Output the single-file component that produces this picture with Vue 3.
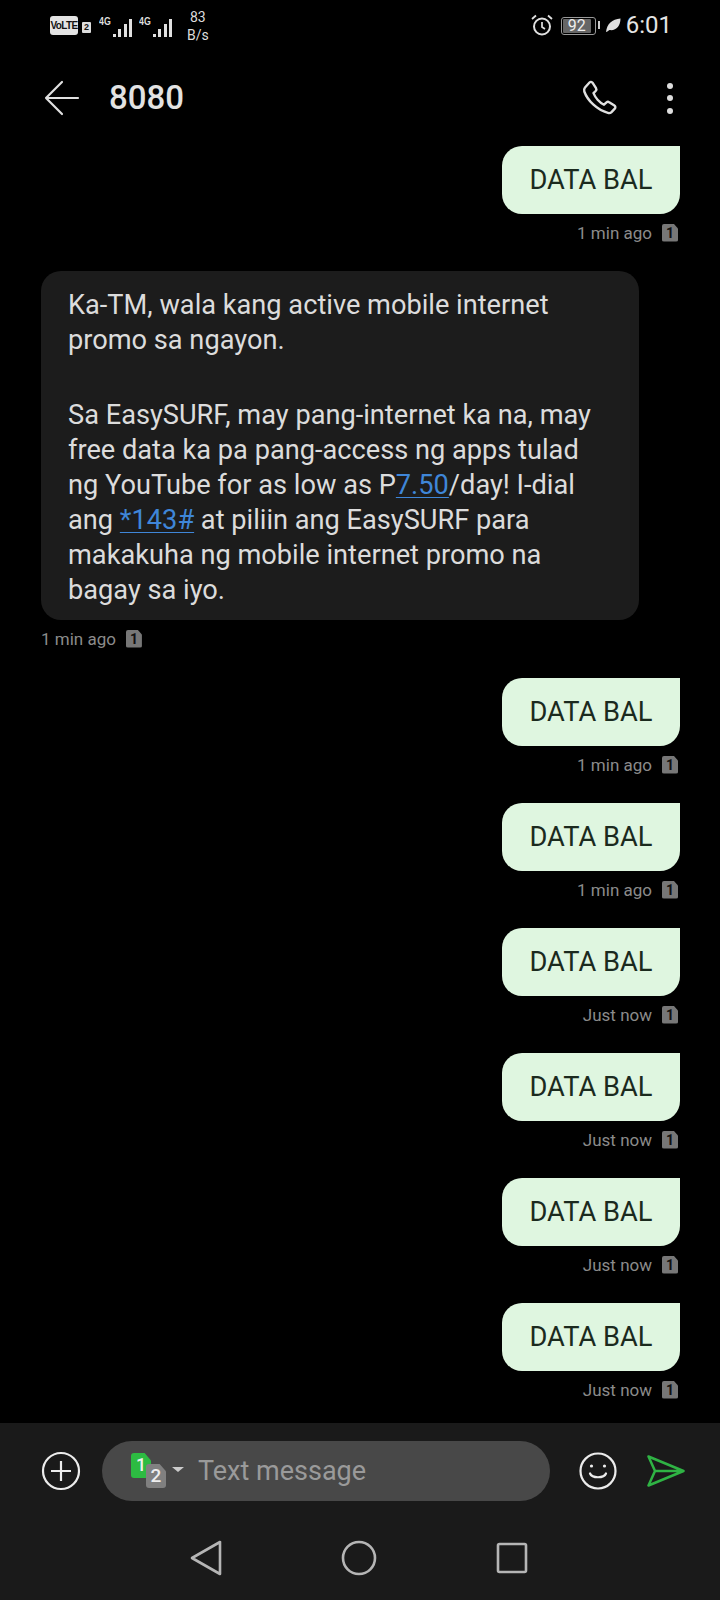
<script setup>
const sent = [
  { time: '1 min ago' },
  { time: '1 min ago' },
  { time: 'Just now' },
  { time: 'Just now' },
  { time: 'Just now' },
  { time: 'Just now' },
]
const barHeights = [3, 8, 13, 18]
</script>

<template>
  <div class="screen">
    <div class="status">
      <div class="status-left">
        <span class="volte">VoLTE</span>
        <span class="mini-sim">2</span>
        <div class="signal first">
          <span class="net">4G</span>
          <span class="bars">
            <i v-for="h in barHeights" :key="h" :style="{ height: h + 'px' }"></i>
          </span>
        </div>
        <div class="signal second">
          <span class="net">4G</span>
          <span class="bars">
            <i v-for="h in barHeights" :key="h" :style="{ height: h + 'px' }"></i>
          </span>
        </div>
        <div class="speed">83<br />B/s</div>
      </div>
      <div class="status-right">
        <svg class="alarm" width="24" height="24" viewBox="0 0 24 24" fill="none" stroke="#e0e0e0" stroke-width="2">
          <circle cx="12" cy="13.5" r="8" />
          <path d="M12 9v5l3 2" stroke-width="1.7" />
          <path d="M2 6l4-3.5M22 6l-4-3.5" stroke-width="1.8" />
        </svg>
        <div class="battery"><span class="level">92</span></div>
        <span class="nub"></span>
        <svg class="leaf" width="16" height="16" viewBox="0 0 16 16">
          <path d="M1 15C2 7 7 2 15.500 1.500 15.500 9 11 14 4.500 13 3.500 13.500 2 15 1 15Z" fill="#e0e0e0" />
        </svg>
        <span class="clock">6:01</span>
      </div>
    </div>

    <header class="head">
      <svg class="back" width="36" height="36" viewBox="0 0 36 36" fill="none" stroke="#e0e0e0" stroke-width="2.200" stroke-linecap="round" stroke-linejoin="round">
        <path d="M34 18H2M18 2 2 18l16 16" />
      </svg>
      <h1 class="title">8080</h1>
      <svg class="phone" width="36" height="36" viewBox="0 0 36 36" fill="none" stroke="#e0e0e0" stroke-width="2.400" stroke-linejoin="round">
        <path d="M3 7.500 7.500 2.500c1-1 2.300-.8 3 .2l3.500 5.500c.6 1 .5 2-.3 2.800l-2.200 2.200c1.500 4 6 9.200 10.500 11.500l2.500-2.300c.8-.7 1.800-.8 2.700-.2l5.200 3.300c1.100.7 1.300 2.200.4 3.100l-3.300 3.500c-1 1-2.300 1.200-3.600.8C15 30 5.500 20.500 2.300 11.500 1.900 10 2.200 8.500 3 7.500Z" />
      </svg>
      <div class="dots"><i></i><i></i><i></i></div>
    </header>

    <main class="thread">
      <div class="msg out">
        <div class="bubble-out">DATA BAL</div>
        <div class="meta"><span>1 min ago</span><span class="sim">1</span></div>
      </div>

      <div class="msg in">
        <div class="bubble-in">
          <p>
            Ka-TM, wala kang active mobile internet<br />
            promo sa ngayon.
          </p>
          <p>
            Sa EasySURF, may pang-internet ka na, may<br />
            free data ka pa pang-access ng apps tulad<br />
            ng YouTube for as low as P<a class="link">7.50</a>/day! I-dial<br />
            ang <a class="link">*143#</a> at piliin ang EasySURF para<br />
            makakuha ng mobile internet promo na<br />
            bagay sa iyo.
          </p>
        </div>
        <div class="meta"><span>1 min ago</span><span class="sim">1</span></div>
      </div>

      <div v-for="(m, i) in sent" :key="i" class="msg out">
        <div class="bubble-out">DATA BAL</div>
        <div class="meta"><span>{{ m.time }}</span><span class="sim">1</span></div>
      </div>
    </main>

    <footer class="dock">
      <div class="composer">
        <svg width="40" height="40" viewBox="0 0 40 40" fill="none" stroke="#ececec" stroke-width="2.200" class="plus">
          <circle cx="20" cy="20" r="18" />
          <path d="M20 10v20M10 20h20" />
        </svg>
        <div class="pill">
          <div class="sims">
            <span class="sim-a">1</span>
            <span class="sim-b">2</span>
          </div>
          <span class="caret"></span>
          <span class="placeholder">Text message</span>
        </div>
        <svg width="38" height="38" viewBox="0 0 38 38" fill="none" stroke="#ececec" stroke-width="2.200" class="smile">
          <circle cx="19" cy="19" r="17.500" />
          <circle cx="12.500" cy="14" r="1.600" fill="#ececec" stroke="none" />
          <circle cx="25.500" cy="14" r="1.600" fill="#ececec" stroke="none" />
          <path d="M11 21.500c2 5 14 5 16 0" stroke-linecap="round" />
        </svg>
        <svg width="38" height="32" viewBox="0 0 38 32" fill="none" stroke="#2fb344" stroke-width="2.500" stroke-linejoin="round" class="send">
          <path d="M1.500 1.500 36.500 16 1.500 30.500 8 16ZM8 16h28" />
        </svg>
      </div>
      <nav class="nav">
        <svg width="32" height="36" viewBox="0 0 32 36" fill="none" stroke="#b5b5b5" stroke-width="2.600" stroke-linejoin="round">
          <path d="M30 2v32L2 18Z" />
        </svg>
        <svg width="36" height="36" viewBox="0 0 36 36" fill="none" stroke="#b5b5b5" stroke-width="2.600">
          <circle cx="18" cy="18" r="16" />
        </svg>
        <svg width="32" height="32" viewBox="0 0 32 32" fill="none" stroke="#b5b5b5" stroke-width="2.600" stroke-linejoin="round">
          <rect x="2" y="2" width="28" height="28" rx="1.500" />
        </svg>
      </nav>
    </footer>
  </div>
</template>

<style>
html, body { margin: 0; background: #000; }
</style>

<style scoped>
.screen {
  width: 720px;
  height: 1600px;
  background: #000;
  display: flex;
  flex-direction: column;
  font-family: Roboto, "Liberation Sans", sans-serif;
  overflow: hidden;
}
.status {
  height: 50px;
  flex: none;
  display: flex;
  justify-content: space-between;
  align-items: center;
  padding: 0 50px;
  box-sizing: border-box;
  color: #e0e0e0;
}
.status-left, .status-right { display: flex; align-items: center; }
.volte {
  width: 28px; height: 19px; border-radius: 3px; background: #e4e4e4; color: #111;
  font: 700 10px/19px "Liberation Sans", sans-serif; letter-spacing: -0.6px; text-align: center;
  margin-top: 1px;
}
.mini-sim {
  width: 9px; height: 11px; margin-left: 4px; margin-top: 5px; border-radius: 1px; background: #ddd; color: #111;
  font: 700 9px/11px "Liberation Sans", sans-serif; text-align: center;
}
.signal { position: relative; display: flex; align-items: flex-end; height: 22px; margin-top: 2px; }
.signal.first { width: 33px; margin-left: 8px; justify-content: flex-end; }
.signal.second { width: 33px; margin-left: 7px; justify-content: flex-end; }
.net { position: absolute; left: 0; top: 0; font: 700 11px/12px "Liberation Sans", sans-serif; color: #ddd; transform: scaleX(.8); transform-origin: left; }
.bars { display: flex; align-items: flex-end; gap: 2.500px; }
.bars i { display: block; width: 3px; background: #e0e0e0; }
.speed { margin-left: 15px; font-size: 14px; line-height: 18px; text-align: center; color: #ddd; margin-top: 1px; }
.alarm { margin-right: 7px; }
.battery {
  width: 35px; height: 18px; box-sizing: border-box; border: 1.500px solid #999; border-radius: 3px; padding: 1px;
  margin-top: 1px;
}
.level {
  display: block; width: 90%; height: 100%; background: #666; color: #eee; border-radius: 1px;
  font-size: 16px; line-height: 13px; text-align: center;
}
.nub { width: 2px; height: 8px; background: #ccc; margin-left: 2px; margin-right: 5px; }
.leaf { margin-right: 5px; }
.clock { font-size: 24px; line-height: 28px; color: #e4e4e4; margin-right: -2px; }

.head {
  height: 96px;
  flex: none;
  display: flex;
  align-items: center;
  padding: 0 47px 0 44px;
  box-sizing: border-box;
}
.title {
  margin: 0 0 0 29px;
  flex: 1;
  font-size: 33px;
  font-weight: 500;
  color: #e2e2e2;
  line-height: 40px;
}
.dots { display: flex; flex-direction: column; gap: 6.500px; margin-left: 49px; }
.dots i { width: 6px; height: 6px; border-radius: 50%; background: #ddd; }

.thread { flex: 1; min-height: 0; display: flex; flex-direction: column; }
.msg { display: flex; flex-direction: column; flex: none; }
.msg.out { align-items: flex-end; padding-right: 40px; margin-bottom: 20px; }
.msg.in { align-items: flex-start; padding-left: 41px; margin-bottom: 21px; }
.bubble-out {
  width: 178px;
  height: 68px;
  box-sizing: border-box;
  padding-top: 1px;
  background: #dff6e0;
  border-radius: 20px 0 20px 20px;
  color: #1b2a1e;
  font-size: 27.300px;
  line-height: 67px;
  text-align: center;
}
.bubble-in {
  width: 598px;
  box-sizing: border-box;
  padding: 17px 27px 12px;
  background: #1c1c1c;
  border-radius: 20px;
  color: #dcdcdc;
  font-size: 27.200px;
  line-height: 35px;
  white-space: nowrap;
}
.bubble-in p { margin: 0; }
.bubble-in p + p { margin-top: 40px; }
.link { color: #3f86d8; text-decoration: underline; text-underline-offset: 3px; text-decoration-thickness: 1px; }
.meta {
  height: 37px;
  display: flex;
  align-items: center;
  gap: 10px;
  color: #8b8b8b;
  font-size: 17px;
}
.msg.out .meta { padding-right: 2px; }
.sim {
  width: 16px; height: 18px; background: #777; color: #111; border-radius: 2px;
  clip-path: polygon(0 0, 72% 0, 100% 28%, 100% 100%, 0 100%);
  font-size: 14px; font-weight: 700; line-height: 18px; text-align: center;
}

.dock { height: 177px; flex: none; background: #1a1a1a; display: flex; flex-direction: column; }
.composer { display: flex; align-items: center; height: 96px; padding: 0 0 0 41px; box-sizing: border-box; }
.pill {
  width: 448px; height: 60px; margin-left: 21px; background: #484848; border-radius: 30px;
  display: flex; align-items: center; flex: none;
}
.sims { position: relative; width: 36px; height: 36px; margin-left: 29px; flex: none; }
.sim-a, .sim-b {
  position: absolute; color: #eee; font-size: 15px; font-weight: 500; text-align: center; border-radius: 3px;
  clip-path: polygon(0 0, 68% 0, 100% 30%, 100% 100%, 0 100%);
}
.sim-a { left: 0; top: 0; width: 20px; height: 25px; line-height: 24px; background: #2dbb42; font-size: 18px; }
.sim-b { left: 15px; top: 11px; width: 20px; height: 24px; line-height: 24px; background: #808080; font-size: 19px; }
.caret {
  width: 0; height: 0; margin-left: 5px; margin-top: -4px;
  border-left: 6px solid transparent; border-right: 6px solid transparent; border-top: 5px solid #ccc;
}
.placeholder { margin-left: 14px; font-size: 27px; color: #9a9a9a; }
.smile { margin-left: 29px; flex: none; }
.send { margin-left: 30px; flex: none; }
.nav {
  flex: 1; display: flex; align-items: center; padding: 0 192px 3px 190px; justify-content: space-between;
}
</style>
